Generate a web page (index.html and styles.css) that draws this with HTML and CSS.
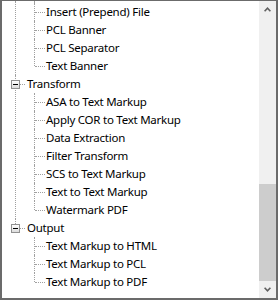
FILE: index.html
```html
<!DOCTYPE html>
<html>
<head>
<meta charset="utf-8">
<link rel="stylesheet" href="styles.css">
</head>
<body>
<div class="tree-view">
  <div class="tree">
    <ul class="root">
      <li class="l0 cont">
        <ul class="children cont">
          <li><div class="row leaf"><span class="label">Insert (Prepend) File</span></div></li>
          <li><div class="row leaf"><span class="label">PCL Banner</span></div></li>
          <li><div class="row leaf"><span class="label">PCL Separator</span></div></li>
          <li><div class="row leaf"><span class="label">Text Banner</span></div></li>
        </ul>
      </li>
      <li class="l0">
        <div class="row node"><span class="expander"></span><span class="label">Transform</span></div>
        <ul class="children">
          <li><div class="row leaf"><span class="label">ASA to Text Markup</span></div></li>
          <li><div class="row leaf"><span class="label">Apply COR to Text Markup</span></div></li>
          <li><div class="row leaf"><span class="label">Data Extraction</span></div></li>
          <li><div class="row leaf"><span class="label">Filter Transform</span></div></li>
          <li><div class="row leaf"><span class="label">SCS to Text Markup</span></div></li>
          <li><div class="row leaf"><span class="label">Text to Text Markup</span></div></li>
          <li><div class="row leaf"><span class="label">Watermark PDF</span></div></li>
        </ul>
      </li>
      <li class="l0">
        <div class="row node"><span class="expander"></span><span class="label">Output</span></div>
        <ul class="children">
          <li><div class="row leaf"><span class="label">Text Markup to HTML</span></div></li>
          <li><div class="row leaf"><span class="label">Text Markup to PCL</span></div></li>
          <li><div class="row leaf"><span class="label">Text Markup to PDF</span></div></li>
        </ul>
      </li>
    </ul>
  </div>
  <div class="scrollbar">
    <div class="sb-btn">
      <svg width="7" height="5" viewBox="0 0 7 5"><polyline points="0.6,4.3 3.5,1.2 6.4,4.3" fill="none" stroke="#606060" stroke-width="1.6"/></svg>
    </div>
    <div class="sb-track"><div class="sb-thumb"></div></div>
    <div class="sb-btn">
      <svg width="7" height="5" viewBox="0 0 7 5"><polyline points="0.6,0.7 3.5,3.8 6.4,0.7" fill="none" stroke="#606060" stroke-width="1.6"/></svg>
    </div>
  </div>
</div>
</body>
</html>
```
FILE: styles.css
```css
html, body {
  margin: 0;
  padding: 0;
  background: #fff;
}

.tree-view {
  width: 278px;
  height: 300px;
  box-sizing: border-box;
  border: 2px solid #6b6b6b;
  border-top-width: 1px;
  display: flex;
  background: #fff;
  overflow: hidden;
}

.tree {
  flex: 1;
  overflow: hidden;
  font-family: "Noto Sans", "Liberation Sans", sans-serif;
  font-size: 11.5px;
  letter-spacing: -0.25px;
  color: #000;
}

ul {
  list-style: none;
  margin: 0;
  padding: 0;
}

li {
  position: relative;
}

.row {
  height: 18px;
  line-height: 18px;
  display: flex;
  align-items: center;
  position: relative;
  white-space: nowrap;
}

/* vertical tree lines */
.l0::before {
  content: "";
  position: absolute;
  left: 13px;
  top: 0;
  bottom: 0;
  border-left: 1px dotted #a0a0a0;
}
.l0:last-child::before {
  bottom: auto;
  height: 9px;
}

.children > li::before {
  content: "";
  position: absolute;
  left: 32px;
  top: 0;
  bottom: 0;
  border-left: 1px dotted #a0a0a0;
}
.children > li:last-child::before {
  bottom: auto;
  height: 9px;
}

.children.cont {
  padding-top: 2px;
  position: relative;
}
.children.cont::before {
  content: "";
  position: absolute;
  left: 32px;
  top: 0;
  height: 2px;
  border-left: 1px dotted #a0a0a0;
}

/* horizontal connectors */
.row.leaf {
  padding-left: 44px;
}
.row.leaf::before {
  content: "";
  position: absolute;
  left: 33px;
  top: 9px;
  width: 10px;
  border-top: 1px dotted #a0a0a0;
}

.row.node {
  padding-left: 9px;
}
.row.node::before {
  content: "";
  position: absolute;
  left: 18px;
  top: 9px;
  width: 5px;
  border-top: 1px dotted #a0a0a0;
}

.expander {
  width: 9px;
  height: 9px;
  box-sizing: border-box;
  border: 1px solid #919191;
  background: linear-gradient(#ffffff, #dcdcdc);
  position: relative;
  z-index: 1;
  margin-right: 7px;
}
.expander::after {
  content: "";
  position: absolute;
  left: 1px;
  top: 3px;
  width: 5px;
  height: 1px;
  background: #000;
}

/* scrollbar */
.scrollbar {
  width: 17px;
  flex: none;
  background: #f0f0f0;
  display: flex;
  flex-direction: column;
}
.sb-btn {
  height: 17px;
  flex: none;
  display: flex;
  align-items: center;
  justify-content: center;
}
.sb-btn svg {
  display: block;
}
.sb-track {
  flex: 1;
  display: flex;
  flex-direction: column;
  justify-content: flex-end;
}
.sb-thumb {
  height: 97px;
  background: #cdcdcd;
}
```
